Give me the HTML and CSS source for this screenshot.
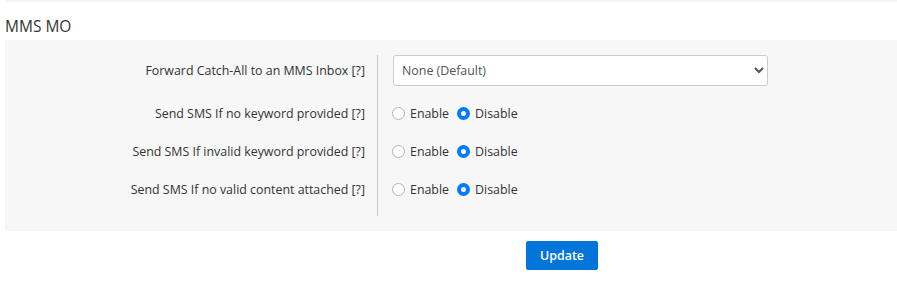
FILE: index.html
```html
<!DOCTYPE html>
<html>
<head>
  <title>MMS MO</title>
  <link rel="stylesheet" href="styles.css">
</head>
<body>
  <div class="top-strip"></div>
  <h3 class="section-title">MMS MO</h3>

  <form class="settings">
    <div class="panel">
      <div class="label first">Forward Catch-All to an MMS Inbox [?]</div>
      <div class="field first">
        <select class="select">
          <option>None (Default)</option>
        </select>
      </div>

      <div class="label">Send SMS If no keyword provided [?]</div>
      <div class="field">
        <label class="radio"><input type="radio" name="nokw"><span class="dot"></span>Enable</label>
        <label class="radio"><input type="radio" name="nokw" checked><span class="dot"></span>Disable</label>
      </div>

      <div class="label">Send SMS If invalid keyword provided [?]</div>
      <div class="field">
        <label class="radio"><input type="radio" name="badkw"><span class="dot"></span>Enable</label>
        <label class="radio"><input type="radio" name="badkw" checked><span class="dot"></span>Disable</label>
      </div>

      <div class="label">Send SMS If no valid content attached [?]</div>
      <div class="field last">
        <label class="radio"><input type="radio" name="nocontent"><span class="dot"></span>Enable</label>
        <label class="radio"><input type="radio" name="nocontent" checked><span class="dot"></span>Disable</label>
      </div>
    </div>

    <div class="actions">
      <button type="button" class="btn-update">Update</button>
    </div>
  </form>
</body>
</html>
```

FILE: styles.css
```css
body {
  margin: 0;
  padding: 0 0 0 5px;
  background-color: #fff;
  color: #333;
  font-family: "Open Sans", Arial, sans-serif;
  font-size: 12.4px;
}

.top-strip {
  height: 2px;
  background-color: #f5f5f5;
}

.section-title {
  margin: 0;
  padding: 13px 0 0 0;
  height: 25px;
  font-size: 15.5px;
  font-weight: normal;
  color: #333;
}

.settings {
  margin: 0;
}

.panel {
  display: grid;
  grid-template-columns: 372px 1fr;
  align-items: start;
  padding: 15px 0 15px 0;
  background-color: #f7f7f7;
}

.label {
  display: flex;
  align-items: center;
  justify-content: flex-end;
  height: 20px;
  padding: 18px 12px 0 0;
  text-align: right;
  color: #333;
}

.label.first {
  height: 30px;
  padding-top: 0;
}

.field {
  display: flex;
  align-items: center;
  height: 20px;
  padding: 18px 0 0 14px;
  border-left: 1px solid #c6c6c6;
}

.field.first {
  height: 30px;
  padding-top: 0;
  padding-left: 15px;
}

.field.last {
  padding-bottom: 17px;
}

.select {
  width: 375px;
  height: 31px;
  padding: 0 4px;
  background-color: #fff;
  color: #555;
  border: 1px solid #ccc;
  border-radius: 3px;
  font-family: "Open Sans", Arial, sans-serif;
  font-size: 12.4px;
}

.radio {
  display: inline-flex;
  align-items: center;
  margin-right: 8px;
  color: #333;
  cursor: pointer;
}

.radio input {
  display: none;
}

.radio .dot {
  box-sizing: border-box;
  width: 13px;
  height: 13px;
  margin-right: 5px;
  border: 1px solid #adb5bd;
  border-radius: 50%;
  background-color: #fff;
}

.radio input:checked + .dot {
  border: 4px solid #007bff;
  background-color: #fff;
}

.actions {
  padding: 10px 0 0 521px;
}

.btn-update {
  width: 72px;
  height: 29px;
  padding: 0;
  background-color: #0275d8;
  color: #fff;
  border: 1px solid #0275d8;
  border-radius: 2px;
  font-family: "Open Sans", Arial, sans-serif;
  font-size: 12.4px;
  font-weight: 600;
  cursor: pointer;
}
```
